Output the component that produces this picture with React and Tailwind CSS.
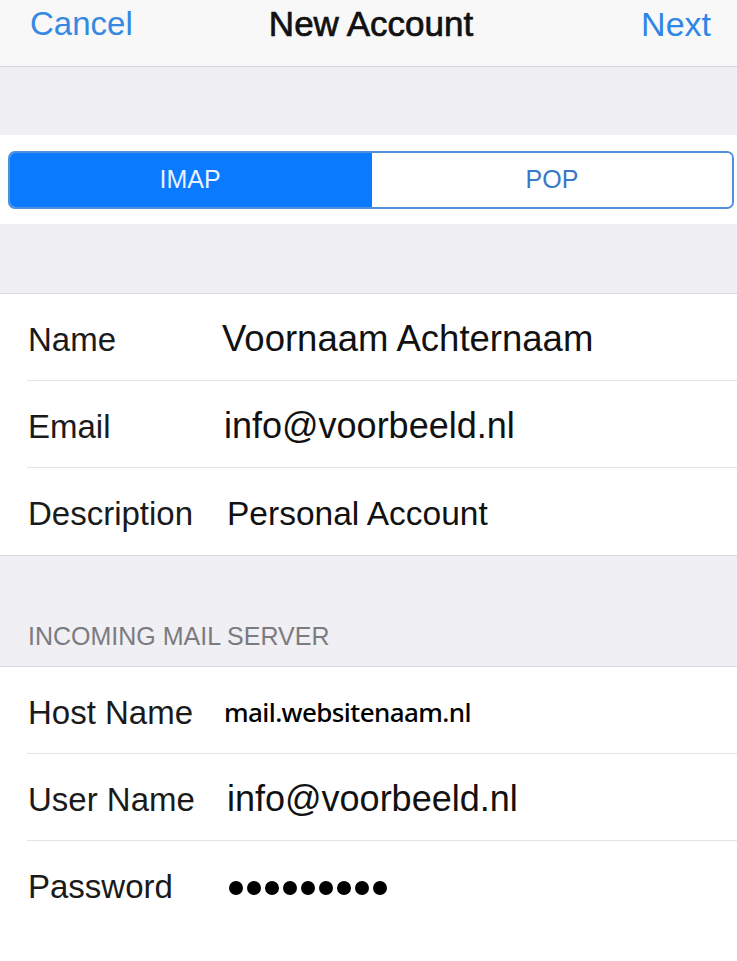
const font = { fontFamily: '"Liberation Sans", Arial, sans-serif' };

function Row({ label, children, last }) {
  return (
    <div className="pl-[27px]">
      <div className={`h-[87px] flex items-center pt-[4px] ${last ? "" : "border-b border-[#e3e3e6]"}`}>
        <div className="w-[195px] shrink-0 pl-[1px] text-[33px] text-[#1a1a1a] leading-none">{label}</div>
        {children}
      </div>
    </div>
  );
}

export default function App() {
  return (
    <div className="w-[737px] h-[961px] overflow-hidden bg-white" style={font}>
      {/* Nav bar */}
      <div className="h-[67px] bg-[#f8f8f8] border-b border-[#d6d6da] grid grid-cols-[1fr_auto_1fr] items-start px-[30px] pt-[5px]">
        <span className="text-[33px] leading-[38px] text-[#3589e2]">Cancel</span>
        <span className="text-[35px] leading-[38px] text-[#111] ml-[5px] [-webkit-text-stroke:0.7px_#111]">New Account</span>
        <span className="text-[34px] leading-[38px] text-[#2f86e6] justify-self-end mr-[-4px]">Next</span>
      </div>

      <div className="h-[68px] bg-[#efeff4]" />

      {/* Segmented control */}
      <div className="bg-white pt-[16px] pb-[15px] pl-[8px] pr-[3px]">
        <div className="h-[58px] flex rounded-[7px] border-2 border-[#4f8fdc] overflow-hidden">
          <div className="w-[362px] bg-[#0a7aff] flex items-center justify-center text-[25px] text-[#e8f1ff] pr-[2px]">IMAP</div>
          <div className="flex-1 bg-white flex items-center justify-center text-[25px] text-[#3a78c8]">POP</div>
        </div>
      </div>

      <div className="h-[70px] bg-[#efeff4] border-b border-[#dcdce0]" />

      {/* Account section */}
      <div className="bg-white">
        <Row label="Name">
          <span className="text-[36.5px] leading-none text-[#111]">Voornaam Achternaam</span>
        </Row>
        <Row label="Email">
          <span className="text-[36px] leading-none text-[#111] ml-[2px]">info@voorbeeld.nl</span>
        </Row>
        <Row label="Description" last>
          <span className="text-[33.5px] leading-none text-[#111] ml-[5px]">Personal Account</span>
        </Row>
      </div>

      {/* Incoming server header */}
      <div className="h-[112px] bg-[#efeff4] border-t border-[#dcdce0] border-b flex items-end pb-[17px] pl-[28px]">
        <span className="text-[25px] leading-none text-[#7b7b80]">INCOMING MAIL SERVER</span>
      </div>

      <div className="bg-white">
        <Row label="Host Name">
          <span
            className="text-[26px] leading-none text-black font-medium ml-[2px] tracking-[-0.6px]"
            style={{ fontFamily: '"Noto Sans", "Open Sans", sans-serif' }}
          >
            mail.websitenaam.nl
          </span>
        </Row>
        <Row label="User Name">
          <span className="text-[36px] leading-none text-[#111] ml-[5px]">info@voorbeeld.nl</span>
        </Row>
        <Row label="Password" last>
          <div className="flex gap-[4px] ml-[7px] mt-[2px]">
            {[0, 1, 2, 3, 4, 5, 6, 7, 8].map(i => (
              <div key={i} className="w-[14px] h-[14px] rounded-full bg-black" />
            ))}
          </div>
        </Row>
      </div>
    </div>
  );
}
